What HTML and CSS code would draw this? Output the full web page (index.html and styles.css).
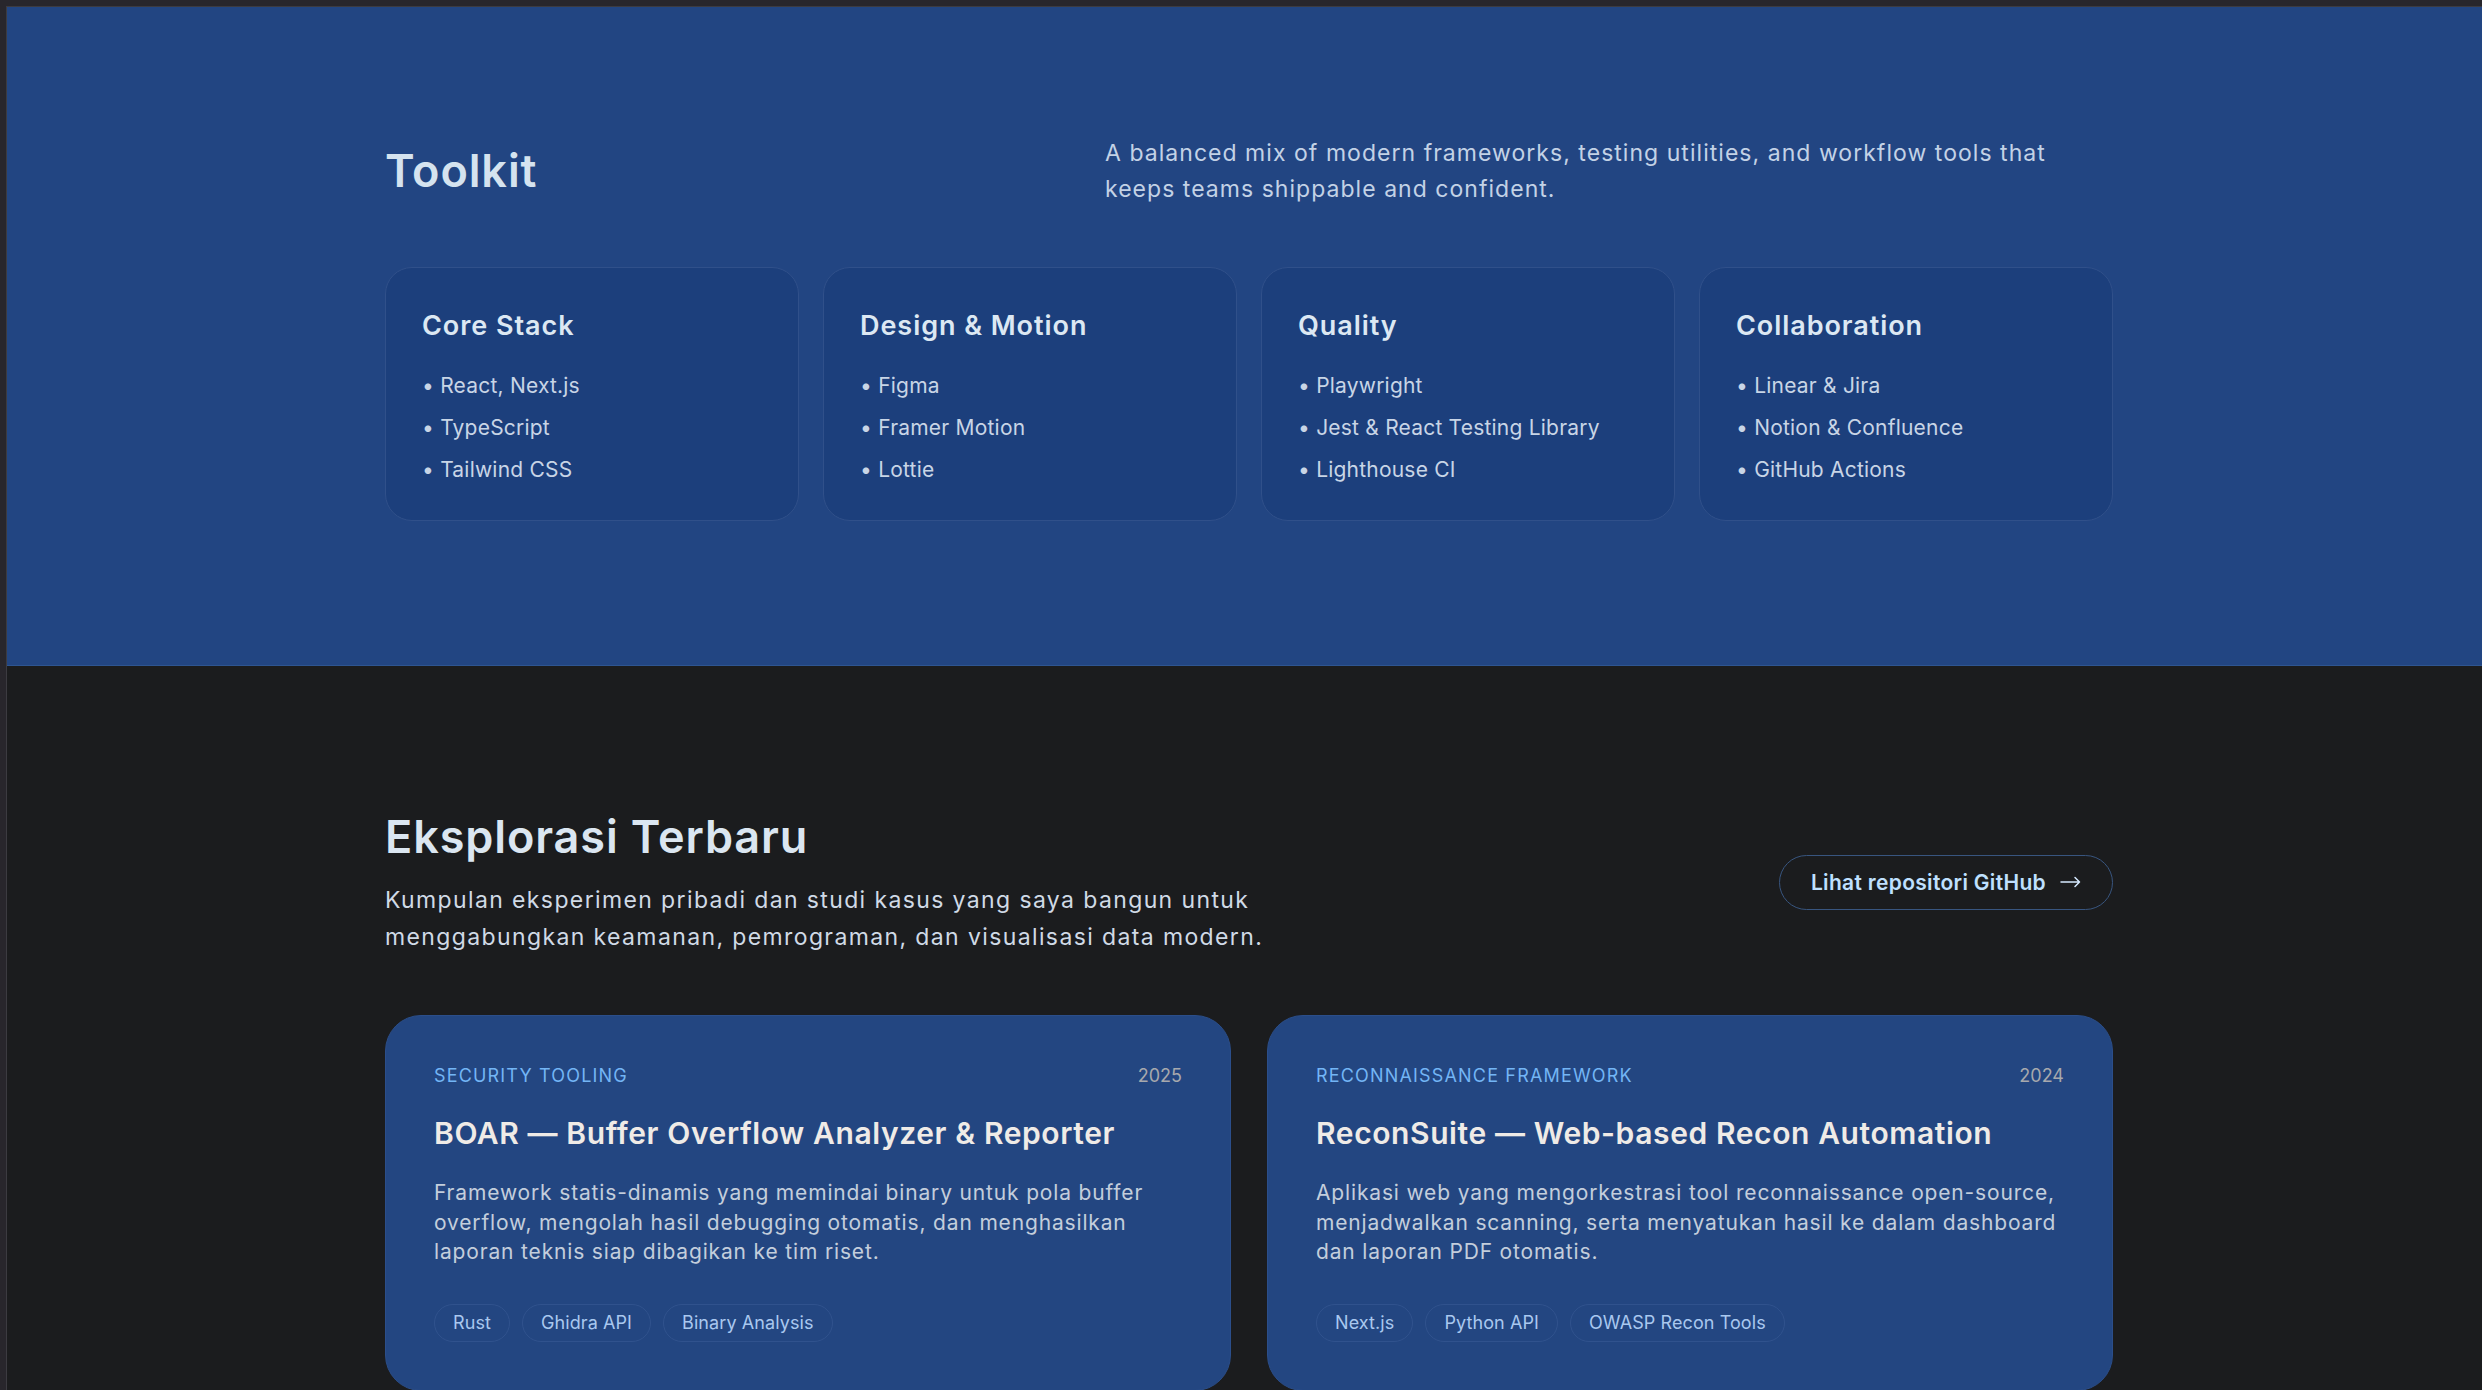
FILE: index.html
```html
<!DOCTYPE html>
<html lang="id">
<head>
<meta charset="utf-8">
<title>Toolkit &amp; Eksplorasi</title>
<link rel="stylesheet" href="styles.css">
</head>
<body>
<div class="page">
  <section class="toolkit">
    <div class="container">
      <div class="tk-head">
        <h2 class="tk-title">Toolkit</h2>
        <p class="tk-desc">A balanced mix of modern frameworks, testing utilities, and workflow tools that keeps teams shippable and confident.</p>
      </div>
      <div class="tk-grid">
        <div class="tk-card">
          <h3 class="tk-card-title">Core Stack</h3>
          <ul class="tk-list">
            <li>• React, Next.js</li>
            <li>• TypeScript</li>
            <li>• Tailwind CSS</li>
          </ul>
        </div>
        <div class="tk-card">
          <h3 class="tk-card-title">Design &amp; Motion</h3>
          <ul class="tk-list">
            <li>• Figma</li>
            <li>• Framer Motion</li>
            <li>• Lottie</li>
          </ul>
        </div>
        <div class="tk-card">
          <h3 class="tk-card-title">Quality</h3>
          <ul class="tk-list">
            <li>• Playwright</li>
            <li>• Jest &amp; React Testing Library</li>
            <li>• Lighthouse CI</li>
          </ul>
        </div>
        <div class="tk-card">
          <h3 class="tk-card-title">Collaboration</h3>
          <ul class="tk-list">
            <li>• Linear &amp; Jira</li>
            <li>• Notion &amp; Confluence</li>
            <li>• GitHub Actions</li>
          </ul>
        </div>
      </div>
    </div>
  </section>

  <section class="explore">
    <div class="container">
      <div class="ex-head">
        <div class="ex-intro">
          <h2 class="ex-title">Eksplorasi Terbaru</h2>
          <p class="ex-sub">Kumpulan eksperimen pribadi dan studi kasus yang saya bangun untuk menggabungkan keamanan, pemrograman, dan visualisasi data modern.</p>
        </div>
        <a class="btn" href="#">Lihat repositori GitHub
          <svg class="arrow" width="21" height="12" viewBox="0 0 21 12" aria-hidden="true"><path d="M1 6H19.5M15 1.5L19.5 6L15 10.5" fill="none" stroke="currentColor" stroke-width="1.5" stroke-linecap="round" stroke-linejoin="round"/></svg>
        </a>
      </div>
      <div class="proj-grid">
        <article class="proj">
          <div class="proj-meta">
            <span class="proj-label">Security Tooling</span>
            <span class="proj-year">2025</span>
          </div>
          <h3 class="proj-title">BOAR — Buffer Overflow Analyzer &amp; Reporter</h3>
          <p class="proj-desc">Framework statis-dinamis yang memindai binary untuk pola buffer overflow, mengolah hasil debugging otomatis, dan menghasilkan laporan teknis siap dibagikan ke tim riset.</p>
          <ul class="tags">
            <li>Rust</li>
            <li>Ghidra API</li>
            <li>Binary Analysis</li>
          </ul>
        </article>
        <article class="proj">
          <div class="proj-meta">
            <span class="proj-label">Reconnaissance Framework</span>
            <span class="proj-year">2024</span>
          </div>
          <h3 class="proj-title">ReconSuite — Web-based Recon Automation</h3>
          <p class="proj-desc">Aplikasi web yang mengorkestrasi tool reconnaissance open-source, menjadwalkan scanning, serta menyatukan hasil ke dalam dashboard dan laporan PDF otomatis.</p>
          <ul class="tags">
            <li>Next.js</li>
            <li>Python API</li>
            <li>OWASP Recon Tools</li>
          </ul>
        </article>
      </div>
    </div>
  </section>
</div>
</body>
</html>
```

FILE: styles.css
```css
* {
  box-sizing: border-box;
  margin: 0;
  padding: 0;
}

html,
body {
  background: #28262c;
}

body {
  font-family: "Inter", "Noto Sans", sans-serif;
  padding: 6px 0 0 6px;
  overflow: hidden;
}

.page {
  border-top: 1px solid #3c3b41;
  border-left: 1px solid #3c3b41;
}

.container {
  width: 1728px;
  margin-left: 378px;
}

/* ---------- Toolkit ---------- */
.toolkit {
  background: #224582;
  padding: 128px 0 144px;
  border-bottom: 1px solid #2e5591;
}

.tk-head {
  display: flex;
  justify-content: space-between;
  align-items: center;
}

.tk-title {
  font-size: 45px;
  line-height: 54px;
  font-weight: 600;
  color: #d5e3ef;
  letter-spacing: 0.02em;
}

.tk-desc {
  width: 1008px;
  font-size: 23px;
  line-height: 36px;
  color: #c3d2e6;
  letter-spacing: 0.045em;
}

.tk-grid {
  margin-top: 60px;
  display: grid;
  grid-template-columns: repeat(4, 1fr);
  gap: 24px;
}

.tk-card {
  background: #1c3f7c;
  border: 1px solid #30508a;
  border-radius: 27px;
  padding: 37px 36px 35px;
}

.tk-card-title {
  font-size: 27px;
  line-height: 42px;
  font-weight: 600;
  color: #dce8f3;
  letter-spacing: 0.035em;
}

.tk-list {
  list-style: none;
  margin-top: 24px;
  display: flex;
  flex-direction: column;
  gap: 12px;
}

.tk-list li {
  font-size: 21px;
  line-height: 30px;
  color: #c8d5e6;
  letter-spacing: 0.01em;
}

/* ---------- Explore ---------- */
.explore {
  background: #1b1c1e;
  padding-top: 144px;
  padding-bottom: 144px;
}

.ex-head {
  display: flex;
  justify-content: space-between;
  align-items: center;
}

.ex-title {
  font-size: 45px;
  line-height: 54px;
  font-weight: 600;
  color: #dbe6f1;
  letter-spacing: 0.02em;
}

.ex-sub {
  margin-top: 18px;
  max-width: 1008px;
  font-size: 23px;
  line-height: 36.5px;
  color: #d0dae6;
  letter-spacing: 0.06em;
}

.btn {
  display: flex;
  align-items: center;
  gap: 14px;
  height: 55px;
  padding: 0 31px;
  border: 1.5px solid #38557f;
  border-radius: 999px;
  font-size: 21px;
  font-weight: 600;
  color: #bfe0ff;
  text-decoration: none;
  letter-spacing: 0.015em;
}

.arrow {
  display: block;
  color: #d6e9ff;
  margin-top: -2px;
}

.proj-grid {
  margin-top: 60px;
  display: grid;
  grid-template-columns: 1fr 1fr;
  gap: 36px;
}

.proj {
  background: #234681;
  border: 1px solid #2b4e8a;
  border-radius: 36px;
  padding: 48px;
}

.proj-meta {
  display: flex;
  justify-content: space-between;
  align-items: center;
  font-size: 18px;
  line-height: 24px;
}

.proj-label {
  text-transform: uppercase;
  letter-spacing: 0.065em;
  color: #73b5f5;
}

.proj-year {
  color: #a7a9ad;
}

.proj-title {
  margin-top: 24px;
  font-size: 30px;
  line-height: 42px;
  font-weight: 600;
  color: #efebe7;
  letter-spacing: 0.02em;
}

.proj-desc {
  margin-top: 24px;
  font-size: 21px;
  line-height: 29.5px;
  color: #c3cedc;
  letter-spacing: 0.04em;
}

.tags {
  list-style: none;
  margin-top: 37px;
  display: flex;
  gap: 12px;
}

.tags li {
  font-size: 18px;
  line-height: 24px;
  padding: 6px 18px;
  border: 1px solid #30528d;
  border-radius: 999px;
  color: #a9c8ef;
  letter-spacing: 0.005em;
}
```
